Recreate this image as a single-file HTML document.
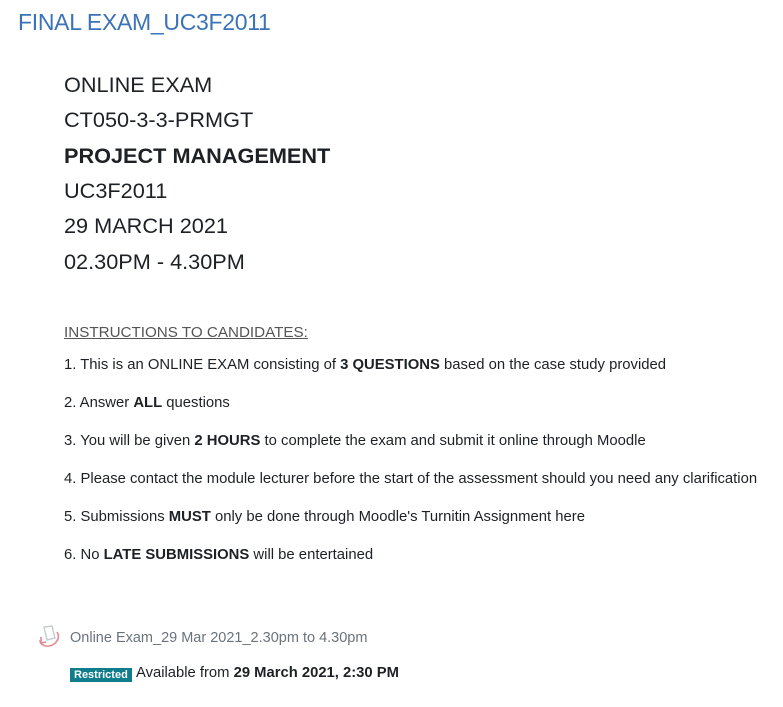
<!DOCTYPE html>
<html><head><meta charset="utf-8"><style>
body{margin:0;background:#fff;width:783px;height:707px;overflow:hidden;font-family:"Liberation Sans",sans-serif;color:#1d2125;position:relative}
.a{position:absolute;white-space:nowrap}
.t{left:18px;top:9px;font-size:23px;color:#3b73b9;font-weight:300;letter-spacing:-0.3px}
.big{left:64px;font-size:21.7px;color:#1d2125;line-height:30px}
.i{left:64px;font-size:14.85px;line-height:20px;color:#1d2125}
.hd{left:64px;top:324px;font-size:15.2px;color:#555;text-decoration:underline}
</style></head><body>
<div class="a t">FINAL EXAM_UC3F2011</div>
<div class="a big" style="top:70px">ONLINE EXAM</div>
<div class="a big" style="top:105px">CT050-3-3-PRMGT</div>
<div class="a big" style="top:141px;font-weight:bold">PROJECT MANAGEMENT</div>
<div class="a big" style="top:176px">UC3F2011</div>
<div class="a big" style="top:211px">29 MARCH 2021</div>
<div class="a big" style="top:247px">02.30PM - 4.30PM</div>
<div class="a hd">INSTRUCTIONS TO CANDIDATES:</div>
<div class="a i" style="top:355px">1. This is an ONLINE EXAM consisting of <b>3 QUESTIONS</b> based on the case study provided</div>
<div class="a i" style="top:393px">2. Answer <b>ALL</b> questions</div>
<div class="a i" style="top:431px">3. You will be given <b>2 HOURS</b> to complete the exam and submit it online through Moodle</div>
<div class="a i" style="top:469px">4. Please contact the module lecturer before the start of the assessment should you need any clarification</div>
<div class="a i" style="top:507px">5. Submissions <b>MUST</b> only be done through Moodle's Turnitin Assignment here</div>
<div class="a i" style="top:545px">6. No <b>LATE SUBMISSIONS</b> will be entertained</div>
<svg class="a" style="left:38px;top:624px" width="26" height="26" viewBox="0 0 26 26">
<path d="M6 3 L14 2 L17 14 L9 16 Z" fill="none" stroke="#c8cdd4" stroke-width="1.5"/>
<path d="M2 16 C2 22 10 24 16 20 C20 17 22 12 19 8" fill="none" stroke="#e58c8c" stroke-width="1.6"/>
<path d="M3 13 L3 19 L8 18" fill="none" stroke="#e58c8c" stroke-width="1.6"/>
</svg>
<div class="a" style="left:70px;top:630px;font-size:14.5px;color:#6a737b">Online Exam_29 Mar 2021_2.30pm to 4.30pm</div>
<div class="a" style="left:70px;top:668px;height:14px;padding:0 4px;background:#0f7d8c;color:#fff;font-size:11px;font-weight:bold;line-height:14px">Restricted</div>
<div class="a" style="left:136px;top:665px;font-size:14.8px;color:#1d2125">Available from <b>29 March 2021, 2:30 PM</b></div>
</body></html>
